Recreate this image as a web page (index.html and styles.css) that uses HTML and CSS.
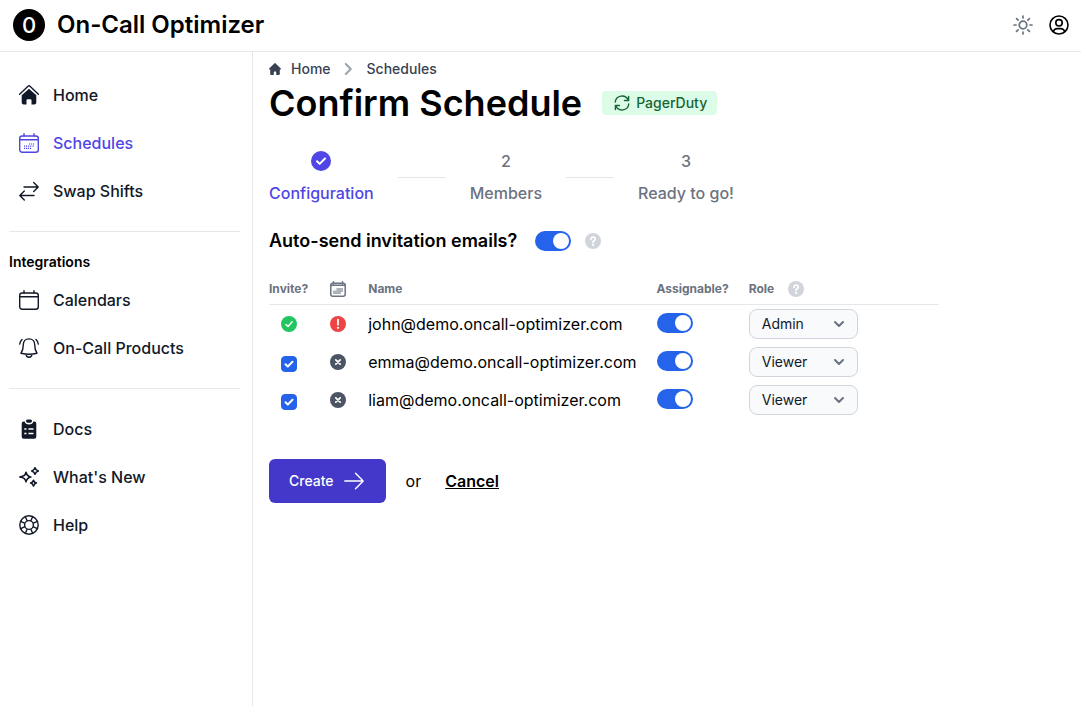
FILE: index.html
```html
<!DOCTYPE html>
<html lang="en">
<head>
    <meta charset="UTF-8">
    <meta name="viewport" content="width=device-width, initial-scale=1.0">
    <title>Confirm Schedule - On-Call Optimizer</title>
    <link rel="stylesheet" href="styles.css">
</head>
<body>
    <header class="topbar">
        <a class="brand" href="#">
            <span class="brand-logo">0</span>
            <span>On-Call Optimizer</span>
        </a>
        <div class="topbar-actions">
            <button class="icon-button" type="button" aria-label="Toggle theme">
                <svg class="icon sun" viewBox="0 0 20 20" fill="none" stroke="currentColor" stroke-width="1.7" stroke-linecap="round"><circle cx="10" cy="10" r="3.8"/><path d="M10 1v2M10 17v2M1 10h2M17 10h2M3.600 3.600l1.500 1.500M14.900 14.900l1.500 1.500M3.600 16.400l1.500-1.500M14.900 5.100l1.500-1.500"/></svg>
            </button>
            <button class="icon-button" type="button" aria-label="Account">
                <svg class="icon" viewBox="0 0 20 20" fill="none" stroke="currentColor" stroke-width="1.6"><circle cx="10" cy="10" r="9"/><circle cx="10" cy="7.8" r="3.2"/><path d="M4.2 16.6c.8-2 2.200-3 4-3h3.600c1.800 0 3.200 1 4 3"/></svg>
            </button>
        </div>
    </header>

    <div class="layout">
        <nav class="sidebar">
            <ul class="nav-list">
                <li><a href="#">
                    <svg class="icon" viewBox="0 0 20 20"><path d="M.6 9.300 9 1.300q1-.9 2 0l8.400 8" fill="none" stroke="currentColor" stroke-width="1.400" stroke-linecap="round"/><path fill="currentColor" d="M10 3.800l7.300 6.500v7.200a2 2 0 0 1-2 2h-2.800v-4.200a1 1 0 0 0-1-1h-3a1 1 0 0 0-1 1v4.200H4.700a2 2 0 0 1-2-2v-7.200z"/></svg>
                    Home
                </a></li>
                <li><a class="active" href="#">
                    <svg class="icon" viewBox="0 0 20 20" fill="none" stroke="currentColor" stroke-width="1.400" stroke-linecap="round"><rect x=".7" y="3" width="18.600" height="16.300" rx="2.500"/><path d="M1 6.800h18M5 .8V3M15 .8V3"/><path stroke-width="1.200" stroke-linecap="butt" d="M10 11h1.200M12 11h1.200M14 11h1.200M5 13.200h1.200M7 13.200h1.200M9 13.200h1.200M11 13.200h1.200M13.500 13.200h1.200M5 15.400h1.200M7 15.400h1.200M9 15.400h1.200M11 15.400h1.200"/></svg>
                    Schedules
                </a></li>
                <li><a href="#">
                    <svg class="icon" viewBox="0 0 20 20" fill="none" stroke="currentColor" stroke-width="1.400" stroke-linecap="round" stroke-linejoin="round"><path d="M5 6h14M14.700 1.500 19.200 6l-4.500 4.500M15 14.500H1M5.300 10 .8 14.500 5.300 19"/></svg>
                    Swap Shifts
                </a></li>
            </ul>
            <hr>
            <h2>Integrations</h2>
            <ul class="nav-list">
                <li><a href="#">
                    <svg class="icon" viewBox="0 0 20 20" fill="none" stroke="currentColor" stroke-width="1.400" stroke-linecap="round"><rect x=".7" y="3" width="18.600" height="16.300" rx="2.500"/><path d="M1 6.800h18M5 .8V3M15 .8V3"/></svg>
                    Calendars
                </a></li>
                <li><a href="#">
                    <svg class="icon" viewBox="0 0 20 20" fill="none" stroke="currentColor" stroke-width="1.400" stroke-linecap="round" stroke-linejoin="round"><path d="M10 .9c-3.500 0-5.700 2.500-5.700 5.900 0 4.700-1 6.500-2.300 8.400 4.800 1.300 11.200 1.300 16 0-1.300-1.900-2.300-3.700-2.300-8.400C15.700 3.400 13.500.9 10 .9zM7.200 16.500a2.800 2.800 0 0 0 5.600 0M.7 6C.9 4.100 1.700 2.600 3 1.400M19.300 6c-.2-1.900-1-3.400-2.300-4.600"/></svg>
                    On-Call Products
                </a></li>
            </ul>
            <hr>
            <ul class="nav-list">
                <li><a href="#">
                    <svg class="icon" viewBox="0 0 20 20"><path fill="currentColor" d="M4.700 2.500h.9c.5 2 2 3 4.400 3s3.900-1 4.400-3h.9a2 2 0 0 1 2 2v13.200a2 2 0 0 1-2 2H4.700a2 2 0 0 1-2-2V4.500a2 2 0 0 1 2-2z"/><rect x="7" y=".5" width="6" height="3.200" rx="1.600" fill="currentColor"/><path d="M5.300 10h2.200M5.300 14.500h2.200M9.500 10h5M9.500 14.500h5" stroke="#fff" stroke-width="1.700"/></svg>
                    Docs
                </a></li>
                <li><a href="#">
                    <svg class="icon" viewBox="0 0 20 20" fill="none" stroke="currentColor" stroke-width="1.600" stroke-linejoin="round"><path d="M7 5.200c.7 3 1.700 4.100 4.800 4.800-3.100.7-4.100 1.800-4.800 4.800-.7-3-1.700-4.100-6.200-4.800 4.500-.7 5.500-1.800 6.200-4.800zM16 .7c.5 2 1.200 2.700 3.300 3.300-2.100.6-2.800 1.300-3.300 3.300-.5-2-1.200-2.700-3.300-3.300 2.100-.6 2.800-1.300 3.300-3.300zM14.500 13.200c.5 1.800 1.100 2.400 2.900 2.900-1.800.5-2.400 1.200-2.900 3-.5-1.800-1.100-2.500-2.900-3 1.800-.5 2.400-1.100 2.900-2.900z"/></svg>
                    What's New
                </a></li>
                <li><a href="#">
                    <svg class="icon" viewBox="0 0 20 20" fill="none" stroke="currentColor" stroke-width="1.400"><circle cx="10" cy="10" r="9.200"/><circle cx="10" cy="10" r="4.400"/><path d="M6.300 1.700l2 4.300M13.700 1.700l-2 4.300M6.300 18.300l2-4.300M13.700 18.300l-2-4.300M1.700 6.300l4.300 2M1.700 13.700l4.300-2M18.300 6.300l-4.300 2M18.300 13.700l-4.300-2"/></svg>
                    Help
                </a></li>
            </ul>
        </nav>

        <main class="content">
            <nav class="breadcrumb" aria-label="Breadcrumb">
                <a href="#">
                    <svg class="icon-12" viewBox="0 0 20 20" fill="currentColor"><path d="M19.700 9.300l-9-9a1 1 0 0 0-1.400 0l-9 9A1 1 0 0 0 1 11h1v7a2 2 0 0 0 2 2h3a1 1 0 0 0 1-1v-4a1 1 0 0 1 1-1h2a1 1 0 0 1 1 1v4a1 1 0 0 0 1 1h3a2 2 0 0 0 2-2v-7h1a1 1 0 0 0 .7-1.700z"/></svg>
                    Home
                </a>
                <svg class="icon-12 crumb-arrow" viewBox="0 0 12 12" fill="none" stroke="currentColor" stroke-width="2" stroke-linecap="round" stroke-linejoin="round"><path d="M2.800 1l5 5-5 5"/></svg>
                <a href="#">Schedules</a>
            </nav>

            <div class="title-row">
                <h1>Confirm Schedule</h1>
                <span class="badge">
                    <svg class="icon-16" viewBox="0 0 16 16" fill="none" stroke="currentColor" stroke-width="1.400" stroke-linecap="round" stroke-linejoin="round"><path d="M1.200 7A6.800 6.800 0 0 1 14.200 5.200M14.600 1.400v4.100h-4.100M14.800 9A6.800 6.800 0 0 1 1.800 10.800M1.400 14.600v-4.100h4.100"/></svg>
                    PagerDuty
                </span>
            </div>

            <ol class="steps">
                <li class="done">
                    <span class="step-mark"><svg class="icon" viewBox="0 0 20 20"><circle cx="10" cy="10" r="10" fill="currentColor"/><path d="M6 10.300l2.700 2.600L14 7.500" fill="none" stroke="#fff" stroke-width="2" stroke-linecap="round" stroke-linejoin="round"/></svg></span>
                    <span>Configuration</span>
                </li>
                <li>
                    <span class="step-mark">2</span>
                    <span>Members</span>
                </li>
                <li>
                    <span class="step-mark">3</span>
                    <span>Ready to go!</span>
                </li>
            </ol>

            <form>
                <div class="auto-send">
                    <label for="autoSend">Auto-send invitation emails?</label>
                    <input class="toggle" type="checkbox" id="autoSend" checked>
                    <svg class="icon-16 hint" viewBox="0 0 16 16"><circle cx="8" cy="8" r="8" fill="currentColor"/><path d="M5.900 6.300C5.900 5 6.800 4.200 8 4.200s2.200.8 2.200 1.900c0 1.600-2.200 1.700-2.200 3.200" fill="none" stroke="#fff" stroke-width="1.700" stroke-linecap="round"/><circle cx="8" cy="11.900" r="1.100" fill="#fff"/></svg>
                </div>

                <table class="members">
                    <thead>
                        <tr>
                            <th class="center">Invite?</th>
                            <th class="center calendar-col">
                                <svg class="icon-16" viewBox="0 0 16 16" role="img" aria-label="Calendar" fill="none" stroke="currentColor" stroke-width="1.500" stroke-linecap="round"><rect x=".8" y="2.300" width="14.400" height="12.900" rx="2"/><path d="M1 4.200h14M3.500.8v2M12.500.8v2"/><path stroke="none" fill="currentColor" opacity=".55" d="M6.500 7h6.500v4h-2v2H3V9.500h3.500z"/></svg>
                            </th>
                            <th>Name</th>
                            <th>Assignable?</th>
                            <th>
                                <span class="role-head">Role
                                    <svg class="icon-16 hint" viewBox="0 0 16 16"><circle cx="8" cy="8" r="8" fill="currentColor"/><path d="M5.900 6.300C5.900 5 6.800 4.200 8 4.200s2.200.8 2.200 1.900c0 1.600-2.200 1.700-2.200 3.200" fill="none" stroke="#fff" stroke-width="1.700" stroke-linecap="round"/><circle cx="8" cy="11.900" r="1.100" fill="#fff"/></svg>
                                </span>
                            </th>
                        </tr>
                    </thead>
                    <tbody>
                        <tr>
                            <td class="center"><svg class="icon-16 ok" viewBox="0 0 16 16" role="img" aria-label="Joined"><circle cx="8" cy="8" r="8" fill="currentColor"/><path d="M4.900 8.400l2.200 2.100 4-4.800" fill="none" stroke="#fff" stroke-width="1.400" stroke-linecap="round" stroke-linejoin="round"/></svg></td>
                            <td class="center"><svg class="icon-16 error" viewBox="0 0 16 16" role="img" aria-label="Calendar error"><circle cx="8" cy="8" r="8" fill="currentColor"/><path d="M8 3.700v5" stroke="#fff" stroke-width="1.800" stroke-linecap="round"/><circle cx="8" cy="11.800" r="1.100" fill="#fff"/></svg></td>
                            <td>john@demo.oncall-optimizer.com</td>
                            <td><input class="toggle" type="checkbox" aria-label="Assignable john" checked></td>
                            <td><select aria-label="Role for john"><option selected>Admin</option><option>Viewer</option></select></td>
                        </tr>
                        <tr>
                            <td class="center"><input class="check" type="checkbox" aria-label="Invite emma" checked></td>
                            <td class="center"><svg class="icon-16 none" viewBox="0 0 16 16" role="img" aria-label="No calendar"><circle cx="8" cy="8" r="8" fill="currentColor"/><path d="M5.800 5.800l4.400 4.400M10.200 5.800l-4.400 4.400" stroke="#fff" stroke-width="1.700" stroke-linecap="round"/></svg></td>
                            <td>emma@demo.oncall-optimizer.com</td>
                            <td><input class="toggle" type="checkbox" aria-label="Assignable emma" checked></td>
                            <td><select aria-label="Role for emma"><option>Admin</option><option selected>Viewer</option></select></td>
                        </tr>
                        <tr>
                            <td class="center"><input class="check" type="checkbox" aria-label="Invite liam" checked></td>
                            <td class="center"><svg class="icon-16 none" viewBox="0 0 16 16" role="img" aria-label="No calendar"><circle cx="8" cy="8" r="8" fill="currentColor"/><path d="M5.800 5.800l4.400 4.400M10.200 5.800l-4.400 4.400" stroke="#fff" stroke-width="1.700" stroke-linecap="round"/></svg></td>
                            <td>liam@demo.oncall-optimizer.com</td>
                            <td><input class="toggle" type="checkbox" aria-label="Assignable liam" checked></td>
                            <td><select aria-label="Role for liam"><option>Admin</option><option selected>Viewer</option></select></td>
                        </tr>
                    </tbody>
                </table>

                <div class="actions">
                    <button class="create" type="button">
                        Create
                        <svg class="icon" viewBox="0 0 20 20" fill="none" stroke="currentColor" stroke-width="1.400" stroke-linecap="round" stroke-linejoin="round"><path d="M.8 10h18.400M11.500 2.300l7.700 7.700-7.700 7.700"/></svg>
                    </button>
                    <span>or</span>
                    <a class="cancel" href="#">Cancel</a>
                </div>
            </form>
        </main>
    </div>
</body>
</html>
```
FILE: styles.css
```css
* {
    box-sizing: border-box;
}

body {
    display: flex;
    flex-direction: column;
    min-height: 100vh;
    margin: 0;
    font-family: Inter, "Liberation Sans", sans-serif;
    font-size: 16px;
    line-height: 24px;
    color: #000;
    background-color: #fff;
}

a {
    color: inherit;
    text-decoration: none;
}

button,
select {
    font-family: inherit;
    cursor: pointer;
}

.icon,
.icon-16,
.icon-12 {
    display: block;
    flex: none;
    width: 20px;
    height: 20px;
}

.icon-16 {
    width: 16px;
    height: 16px;
}

.icon-12 {
    width: 12px;
    height: 12px;
}

/* Top bar */
.topbar {
    display: flex;
    justify-content: space-between;
    align-items: center;
    padding: 9px 12px 10px 13px;
    border-bottom: 1px solid #e5e7eb;
}

.brand {
    display: flex;
    align-items: center;
    gap: 12px;
    font-size: 24px;
    line-height: 32px;
    font-weight: 600;
}

.brand-logo {
    width: 32px;
    height: 32px;
    border-radius: 50%;
    font-size: 22px;
    font-weight: 500;
    text-align: center;
    color: #fff;
    background-color: #000;
}

.topbar-actions {
    display: flex;
    gap: 16px;
}

.icon-button {
    padding: 0;
    border: none;
    color: #000;
    background: none;
}

.sun {
    color: #6b7280;
}

/* Sidebar */
.layout {
    display: flex;
    flex: 1;
}

.sidebar {
    flex: none;
    width: 253px;
    padding: 19px 12px 0 9px;
    border-right: 1px solid #e5e7eb;
}

.sidebar hr {
    margin: 16px 0;
    border: none;
    border-top: 1px solid #e5e7eb;
}

.sidebar h2 {
    margin: 20px 0 4px;
    font-size: 14px;
    line-height: 20px;
    font-weight: 600;
}

.nav-list {
    margin: 0;
    padding: 0;
    list-style: none;
}

.nav-list a {
    display: flex;
    align-items: center;
    gap: 14px;
    padding: 12px 10px;
    font-weight: 500;
    color: #111827;
}

.nav-list .active {
    color: #4f46e5;
}

/* Main column */
.content {
    flex: 1;
    max-width: 702px;
    padding: 7px 16px;
}

.breadcrumb {
    display: flex;
    align-items: center;
    gap: 12px;
    font-size: 14px;
    line-height: 20px;
    font-weight: 500;
    color: #374151;
}

.breadcrumb a {
    display: flex;
    align-items: center;
    gap: 10px;
}

.crumb-arrow {
    color: #9ca3af;
}

.title-row {
    display: flex;
    align-items: center;
    gap: 20px;
    margin-top: 4px;
}

h1 {
    margin: 0;
    font-size: 36px;
    line-height: 40px;
    font-weight: 600;
}

.badge {
    display: flex;
    align-items: center;
    gap: 6px;
    padding: 2px 10px 2px 12px;
    border-radius: 4px;
    font-size: 14px;
    line-height: 20px;
    font-weight: 500;
    color: #166534;
    background-color: #dcfce7;
}

/* Progress steps */
.steps {
    display: flex;
    gap: 24px;
    margin: 22px 0 20px;
    padding: 0;
    list-style: none;
    font-weight: 500;
    line-height: 32px;
    color: #6b7280;
}

.steps li {
    display: grid;
    grid-template-columns: auto;
    justify-items: center;
}

.steps li + li {
    grid-template-columns: 48px auto;
    column-gap: 24px;
}

.steps li + li::before {
    content: "";
    grid-row: span 2;
    align-self: center;
    width: 48px;
    border-top: 1px solid #e5e7eb;
}

.step-mark {
    display: flex;
    align-items: center;
    height: 32px;
}

.steps .done {
    color: #4f46e5;
}

/* Form */
.auto-send {
    display: flex;
    align-items: center;
    gap: 14px;
    font-size: 18px;
    font-weight: 600;
}

.auto-send label {
    margin-right: 4px;
}

.hint {
    color: #d1d5db;
}

.toggle {
    appearance: none;
    display: block;
    flex: none;
    width: 36px;
    height: 20px;
    margin: 0;
    padding: 2px;
    border-radius: 10px;
    background-color: #e5e7eb;
    cursor: pointer;
}

.toggle::before {
    content: "";
    display: block;
    width: 16px;
    height: 16px;
    border-radius: 50%;
    background-color: #fff;
}

.toggle:checked {
    background-color: #2563eb;
}

.toggle:checked::before {
    margin-left: auto;
}

.check {
    appearance: none;
    display: block;
    width: 16px;
    height: 16px;
    margin: 0;
    border: 1px solid #d1d5db;
    border-radius: 4px;
    cursor: pointer;
}

.check:checked {
    border-color: #2563eb;
    background: #2563eb url("data:image/svg+xml,%3Csvg xmlns='http://www.w3.org/2000/svg' viewBox='0 0 14 14' fill='none' stroke='white' stroke-width='2' stroke-linecap='round' stroke-linejoin='round'%3E%3Cpath d='M3.500 7.300l2.300 2.200 4.700-4.700'/%3E%3C/svg%3E") center no-repeat;
}

.members {
    width: 100%;
    margin-top: 20px;
    border-collapse: separate;
    border-spacing: 0;
}

.members th,
.members td {
    height: 38px;
    padding: 0 20px 0 0;
    text-align: left;
    white-space: nowrap;
}

.members th {
    height: 32px;
    border-bottom: 1px solid #e5e7eb;
    font-size: 12px;
    line-height: 16px;
    font-weight: 700;
    color: #6b7280;
}

.members .calendar-col {
    min-width: 40px;
}

.members th:last-child,
.members td:last-child {
    width: 100%;
    padding-right: 0;
}

.members .toggle {
    margin-bottom: 2px;
}

.center .icon-16 {
    margin: 0 auto;
}

.center .check {
    margin: 4px auto 0;
}

.role-head {
    display: flex;
    gap: 14px;
}

.ok {
    color: #22c55e;
}

.error {
    color: #ef4444;
}

.none {
    color: #4b5563;
}

select {
    appearance: none;
    display: block;
    width: 109px;
    height: 30px;
    padding: 0 32px 1px 12px;
    border: 1px solid #d1d5db;
    border-radius: 8px;
    font-size: 14px;
    color: #111827;
    background: #f9fafb url("data:image/svg+xml,%3Csvg xmlns='http://www.w3.org/2000/svg' width='12' height='12' fill='none' stroke='%236b7280' stroke-width='2' stroke-linecap='round' stroke-linejoin='round'%3E%3Cpath d='M2 4l4 4 4-4'/%3E%3C/svg%3E") right 12px center no-repeat;
}

.actions {
    display: flex;
    align-items: center;
    gap: 20px;
    margin-top: 40px;
}

.create {
    display: flex;
    align-items: center;
    gap: 10px;
    padding: 12px 22px 12px 20px;
    border: none;
    border-radius: 6px;
    font-size: 14px;
    line-height: 20px;
    font-weight: 500;
    color: #fff;
    background-color: #4338ca;
}

.cancel {
    margin-left: 4px;
    font-weight: 600;
    text-decoration: underline;
}
```
